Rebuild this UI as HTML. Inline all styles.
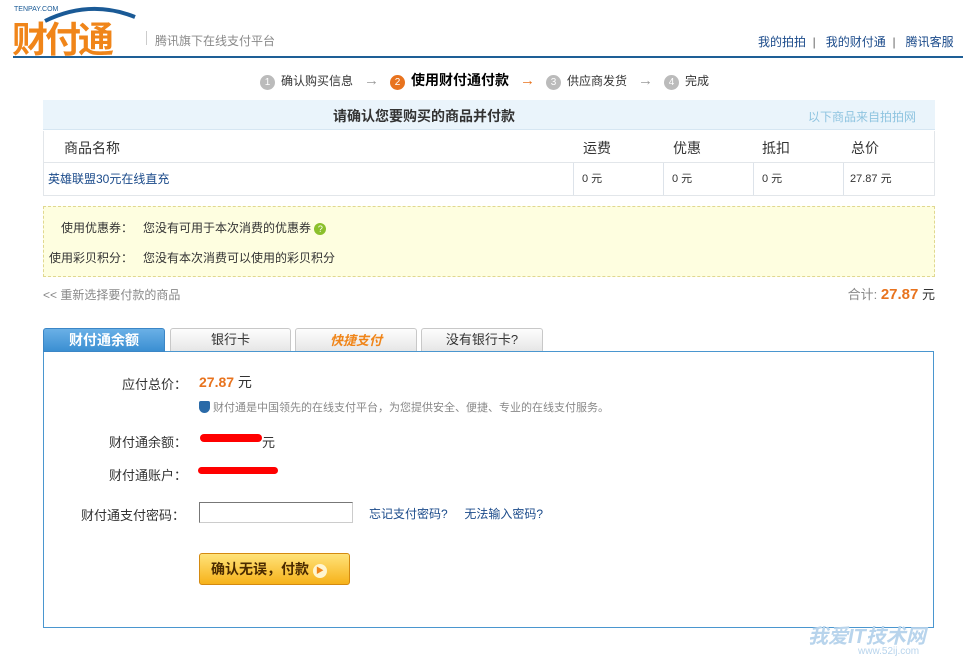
<!DOCTYPE html>
<html><head><meta charset="utf-8"><style>
*{margin:0;padding:0;box-sizing:border-box}
body{width:975px;height:664px;background:#fff;font-family:"Liberation Sans","Noto Sans CJK SC",sans-serif;font-size:12px;color:#333;position:relative;overflow:hidden}
.a{position:absolute;white-space:nowrap}
a{color:#1a4a8a;text-decoration:none}
.cell{position:absolute;border-right:1px solid #dde3ea;height:32px;line-height:32px}
.n{display:inline-block;width:15px;height:15px;border-radius:50%;background:#bbb;color:#fff;text-align:center;font-size:10px;line-height:15px;margin-right:6px}
.ar{color:#999;font-size:15px;margin:0 11px}
</style></head><body>
<div class="a" style="left:14px;top:6px;font-size:7px;color:#1a5a96">TENPAY.COM</div>
<svg class="a" style="left:40px;top:3px" width="100" height="20"><path d="M5 18 Q50 -4 95 14" stroke="#1a5a96" stroke-width="4" fill="none"/></svg>
<div class="a" style="left:12px;top:11px;font-size:36px;font-weight:bold;color:#f08519;letter-spacing:-3px">财付通</div>
<div class="a" style="left:146px;top:31px;width:1px;height:14px;background:#ccc"></div>
<div class="a" style="left:155px;top:32px;font-size:12px;color:#888">腾讯旗下在线支付平台</div>
<div class="a" style="left:758px;top:33px;font-size:12px;color:#1a4a8a">我的拍拍 <span style="color:#666">&nbsp;|&nbsp;</span>&nbsp; 我的财付通 <span style="color:#666">&nbsp;|&nbsp;</span>&nbsp; 腾讯客服</div>
<div class="a" style="left:13px;top:56px;width:950px;height:2px;background:#1e5f96"></div>
<div class="a" style="left:260px;top:72px;font-size:12px;color:#333;line-height:16px">
<span class="n">1</span>确认购买信息<span class="ar">→</span><span class="n" style="background:#e8731e">2</span><b style="font-size:14px;color:#000">使用财付通付款</b><span class="ar" style="color:#e8731e">→</span><span class="n">3</span>供应商发货<span class="ar">→</span><span class="n">4</span>完成</div>
<div class="a" style="left:43px;top:100px;width:892px;height:30px;background:#eaf4fb;border-bottom:1px solid #d6e6f2"></div>
<div class="a" style="left:333px;top:106px;font-size:14px;font-weight:bold;color:#333">请确认您要购买的商品并付款</div>
<div class="a" style="left:808px;top:108px;font-size:12px;color:#8fc4e0">以下商品来自拍拍网</div>
<div class="a" style="left:43px;top:131px;width:892px;height:65px;border:1px solid #e2e6ea;border-top:none"></div>
<div class="a" style="left:43px;top:162px;width:892px;height:1px;background:#e2e6ea"></div>
<div class="a" style="left:64px;top:138px;font-size:14px">商品名称</div>
<div class="a" style="left:583px;top:138px;font-size:14px">运费</div>
<div class="a" style="left:673px;top:138px;font-size:14px">优惠</div>
<div class="a" style="left:762px;top:138px;font-size:14px">抵扣</div>
<div class="a" style="left:851px;top:138px;font-size:14px">总价</div>
<div class="cell" style="left:43px;top:163px;width:531px;padding-left:5px"><a>英雄联盟30元在线直充</a></div>
<div class="cell" style="left:574px;top:163px;width:90px;padding-left:8px;font-size:11px">0 元</div>
<div class="cell" style="left:664px;top:163px;width:90px;padding-left:8px;font-size:11px">0 元</div>
<div class="cell" style="left:754px;top:163px;width:90px;padding-left:8px;font-size:11px">0 元</div>
<div class="cell" style="left:844px;top:163px;width:90px;padding-left:6px;font-size:11px;border:none">27.87 元</div>
<div class="a" style="left:43px;top:206px;width:892px;height:71px;background:#fefee0;border:1px dashed #e0d890"></div>
<div class="a" style="left:61px;top:219px">使用优惠券：&nbsp;&nbsp; 您没有可用于本次消费的优惠券 <span style="display:inline-block;width:12px;height:12px;border-radius:50%;background:#8bc02c;color:#fff;font-size:9px;text-align:center;line-height:12px">?</span></div>
<div class="a" style="left:49px;top:249px">使用彩贝积分：&nbsp;&nbsp; 您没有本次消费可以使用的彩贝积分</div>
<div class="a" style="left:43px;top:286px;color:#888">&lt;&lt; 重新选择要付款的商品</div>
<div class="a" style="left:836px;top:284px;width:99px;text-align:right;color:#888;font-size:13px">合计: <b style="color:#e8731e;font-size:15px">27.87</b> <span style="color:#333">元</span></div>
<div class="a" style="left:43px;top:351px;width:891px;height:277px;border:1px solid #4a96cf"></div>
<div class="a" style="left:43px;top:328px;width:122px;height:24px;background:linear-gradient(#6ab0e6,#3b8fd2);border:1px solid #3b86c6;border-radius:3px 3px 0 0;color:#fff;font-size:14px;font-weight:bold;text-align:center;line-height:22px">财付通余额</div>
<div class="a" style="left:170px;top:328px;width:121px;height:23px;background:linear-gradient(#fdfdfd,#e6e6e6);border:1px solid #c8c8c8;border-bottom:none;border-radius:3px 3px 0 0;text-align:center;line-height:21px;font-size:13px">银行卡</div>
<div class="a" style="left:295px;top:328px;width:122px;height:23px;background:linear-gradient(#fdfdfd,#e6e6e6);border:1px solid #c8c8c8;border-bottom:none;border-radius:3px 3px 0 0;text-align:center;line-height:23px;font-size:13px;font-weight:bold;font-style:italic;color:#f08519">快捷支付</div>
<div class="a" style="left:421px;top:328px;width:122px;height:23px;background:linear-gradient(#fdfdfd,#e6e6e6);border:1px solid #c8c8c8;border-bottom:none;border-radius:3px 3px 0 0;text-align:center;line-height:21px;font-size:13px">没有银行卡?</div>
<div class="a" style="left:122px;top:374px;font-size:13px">应付总价：</div>
<div class="a" style="left:199px;top:372px;font-size:14px"><b style="color:#e8731e">27.87</b> 元</div>
<div class="a" style="left:199px;top:399px;font-size:11px;color:#888"><span style="display:inline-block;width:11px;height:12px;background:#2a6aa8;border-radius:2px 2px 6px 6px;vertical-align:-2px"></span> 财付通是中国领先的在线支付平台，为您提供安全、便捷、专业的在线支付服务。</div>
<div class="a" style="left:109px;top:432px;font-size:13px">财付通余额：</div>
<div class="a" style="left:200px;top:434px;width:62px;height:8px;background:#f00;border-radius:4px"></div>
<div class="a" style="left:262px;top:432px;font-size:13px">元</div>
<div class="a" style="left:109px;top:465px;font-size:13px">财付通账户：</div>
<div class="a" style="left:198px;top:467px;width:80px;height:7px;background:#f00;border-radius:4px"></div>
<div class="a" style="left:81px;top:505px;font-size:13px">财付通支付密码：</div>
<div class="a" style="left:199px;top:502px;width:154px;height:21px;border:1px solid #999;border-color:#777 #ccc #ccc #777"></div>
<div class="a" style="left:369px;top:505px"><a>忘记支付密码?</a>&nbsp;&nbsp;&nbsp;&nbsp; <a>无法输入密码?</a></div>
<div class="a" style="left:199px;top:553px;width:151px;height:32px;background:linear-gradient(#ffe37a,#f6b21a);border:1px solid #d48a10;border-radius:3px;font-size:14px;font-weight:bold;color:#4a2a00;line-height:30px;padding-left:11px">确认无误，付款 <span style="display:inline-block;width:14px;height:14px;border-radius:50%;background:#fff6d0;color:#f08519;font-size:8px;text-align:center;line-height:14px;vertical-align:1px">▶</span></div>
<div class="a" style="left:808px;top:620px;font-size:20px;font-weight:bold;font-style:italic;color:#b8d4ec">我爱IT技术网</div>
<div class="a" style="left:858px;top:646px;font-size:10px;color:#b8d4ec">www.52ij.com</div>
</body></html>
